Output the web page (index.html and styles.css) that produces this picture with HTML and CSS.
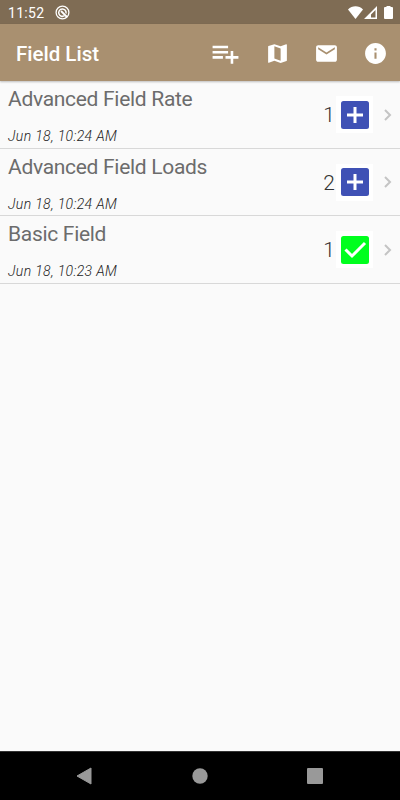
FILE: index.html
```html
<!DOCTYPE html>
<html lang="en">
<head>
    <meta charset="UTF-8">
    <meta name="viewport" content="width=device-width, initial-scale=1.0">
    <title>Field List</title>
    <link rel="stylesheet" href="styles.css">
</head>
<body>

    <div class="status-bar">
        <span class="clock">11:52</span>
        <svg class="notification" viewBox="0 0 15 15">
            <circle cx="7.5" cy="7.5" r="6.4" fill="none" stroke="#fff" stroke-width="1.3"/>
            <path d="M9.500 10.700A3.700 3.700 0 1 1 11 8.500" fill="none" stroke="#fff" stroke-width="1.500"/>
            <path d="M6 6l6 6" stroke="#fff" stroke-width="1.800"/>
        </svg>
        <div class="status-icons">
            <svg width="15" height="13" viewBox="0 0 15 13"><path d="M7.5 13L0 3.5C4-.9 11-.9 15 3.5z" fill="#fff"/></svg>
            <svg width="13" height="13" viewBox="0 0 13 13"><path d="M13 0v13H0zM11.500 4L7 8.500v3h4.500z" fill="#fff" fill-rule="evenodd"/></svg>
            <svg class="battery" width="9" height="13" viewBox="0 0 9 13"><path d="M2.5 0h4v1H8q1 0 1 1v10q0 1-1 1H1q-1 0-1-1V2q0-1 1-1h1.500z" fill="#fff"/></svg>
        </div>
    </div>

    <div class="toolbar">
        <h1>Field List</h1>
        <div class="actions">
            <svg class="add" viewBox="0 0 24 24"><path d="M14 10H2v2h12v-2zm0-4H2v2h12V6zm4 8v-4h-2v4h-4v2h4v4h2v-4h4v-2h-4zM2 16h8v-2H2v2z"/></svg>
            <svg viewBox="0 0 24 24"><path d="M20.500 3l-.16.03L15 5.100 9 3 3.360 4.900c-.21.07-.36.25-.36.48V20.500c0 .28.22.5.5.5l.16-.03L9 18.900l6 2.100 5.640-1.900c.21-.07.36-.25.36-.48V3.500c0-.28-.22-.5-.5-.5zM15 19l-6-2.110V5l6 2.110V19z"/></svg>
            <svg viewBox="0 0 24 24"><path d="M20 4H4c-1.100 0-2 .9-2 2v12c0 1.100.9 2 2 2h16c1.100 0 2-.9 2-2V6c0-1.100-.9-2-2-2zm0 4l-8 5-8-5V6l8 5 8-5v2z"/></svg>
            <svg viewBox="0 0 24 24"><path d="M12 2C6.480 2 2 6.480 2 12s4.480 10 10 10 10-4.480 10-10S17.520 2 12 2zm1 15h-2v-6h2v6zm0-8h-2V7h2v2z"/></svg>
        </div>
    </div>

    <div class="list">
        <div class="row">
            <div class="info">
                <div class="name">Advanced Field Rate</div>
                <div class="date">Jun 18, 10:24 AM</div>
            </div>
            <span class="count">1</span>
            <div class="badge">
                <svg viewBox="0 0 28 28"><rect width="28" height="28" rx="2.500" fill="#3f51b5"/><path d="M14 6v16M6 14h16" stroke="#fff" stroke-width="3"/></svg>
            </div>
            <svg class="chevron" viewBox="0 0 8 12"><path d="M1 1l5 5-5 5"/></svg>
        </div>
        <div class="row">
            <div class="info">
                <div class="name">Advanced Field Loads</div>
                <div class="date">Jun 18, 10:24 AM</div>
            </div>
            <span class="count">2</span>
            <div class="badge">
                <svg viewBox="0 0 28 28"><rect width="28" height="28" rx="2.500" fill="#3f51b5"/><path d="M14 6v16M6 14h16" stroke="#fff" stroke-width="3"/></svg>
            </div>
            <svg class="chevron" viewBox="0 0 8 12"><path d="M1 1l5 5-5 5"/></svg>
        </div>
        <div class="row">
            <div class="info">
                <div class="name">Basic Field</div>
                <div class="date">Jun 18, 10:23 AM</div>
            </div>
            <span class="count">1</span>
            <div class="badge">
                <svg viewBox="0 0 28 28"><rect width="28" height="28" rx="2.500" fill="#00ff1e"/><path d="M4.500 13.500l6.500 6.500L24 7" fill="none" stroke="#fff" stroke-width="3"/></svg>
            </div>
            <svg class="chevron" viewBox="0 0 8 12"><path d="M1 1l5 5-5 5"/></svg>
        </div>
    </div>

    <div class="nav-bar">
        <svg width="16" height="18" viewBox="0 0 16 18"><path d="M15 1v16L1 9z" stroke="#999" stroke-linejoin="round"/></svg>
        <svg width="16" height="16" viewBox="0 0 16 16"><circle cx="8" cy="8" r="7.700"/></svg>
        <svg width="16" height="16" viewBox="0 0 16 16"><rect width="16" height="16" rx="1"/></svg>
    </div>

</body>
</html>
```
FILE: styles.css
```css
* { box-sizing: border-box; }
body { margin: 0; height: 800px; display: flex; flex-direction: column; background-color: #fafafa; font-family: Roboto, sans-serif; overflow: hidden; }
svg { display: block; flex: none; }

/* Status bar */
.status-bar { height: 24px; padding: 0 7px 0 8px; display: flex; align-items: center; background-color: #7f6c54; color: #fff; }
.clock { width: 47px; font-size: 14px; line-height: 24px; padding-top: 1px; letter-spacing: 0.3px; }
.notification { width: 15px; height: 15px; }
.status-icons { margin-left: auto; display: flex; gap: 1px; }
.battery { margin-left: 6px; }

/* Toolbar */
.toolbar { height: 57px; padding: 0 12px 0 16px; display: flex; align-items: center; justify-content: space-between; background-color: #a99070; color: #fff; box-shadow: 0 1px 2px rgba(0,0,0,0.25); z-index: 1; }
.toolbar h1 { margin: 2px 0 0; font-size: 20.500px; font-weight: 500; }
.actions { display: flex; align-items: center; gap: 24px; padding-top: 1px; }
.actions svg { width: 25px; height: 25px; fill: #fff; }
.actions .add { width: 31px; height: 31px; }

/* Field rows */
.list { flex: 1; }
.row { height: 67.500px; padding: 1px 8px 0; display: flex; align-items: center; border-bottom: 1px solid #d8d8d8; }
.info { flex: 1; align-self: stretch; padding-top: 5px; }
.name { font-size: 21px; line-height: 25px; letter-spacing: -0.3px; color: #6c6c6c; }
.date { margin-top: 16px; font-size: 14px; line-height: 17px; font-style: italic; font-weight: 300; letter-spacing: 0.35px; color: #222; }
.count { font-size: 21px; font-weight: 300; color: #333; line-height: 25px; padding-top: 2px; margin-right: 1px; }
.badge { width: 37px; height: 37px; display: flex; align-items: center; justify-content: center; background-color: #fff; }
.badge svg { width: 28px; height: 28px; }
.chevron { width: 8px; height: 12px; margin-left: 11px; fill: none; stroke: #c4c4c4; stroke-width: 2; }

/* Navigation bar */
.nav-bar { height: 49px; padding: 0 77px 0 76px; display: flex; align-items: center; justify-content: space-between; background-color: #000; border-top: 1px solid #333; }
.nav-bar svg { fill: #999; }
```
